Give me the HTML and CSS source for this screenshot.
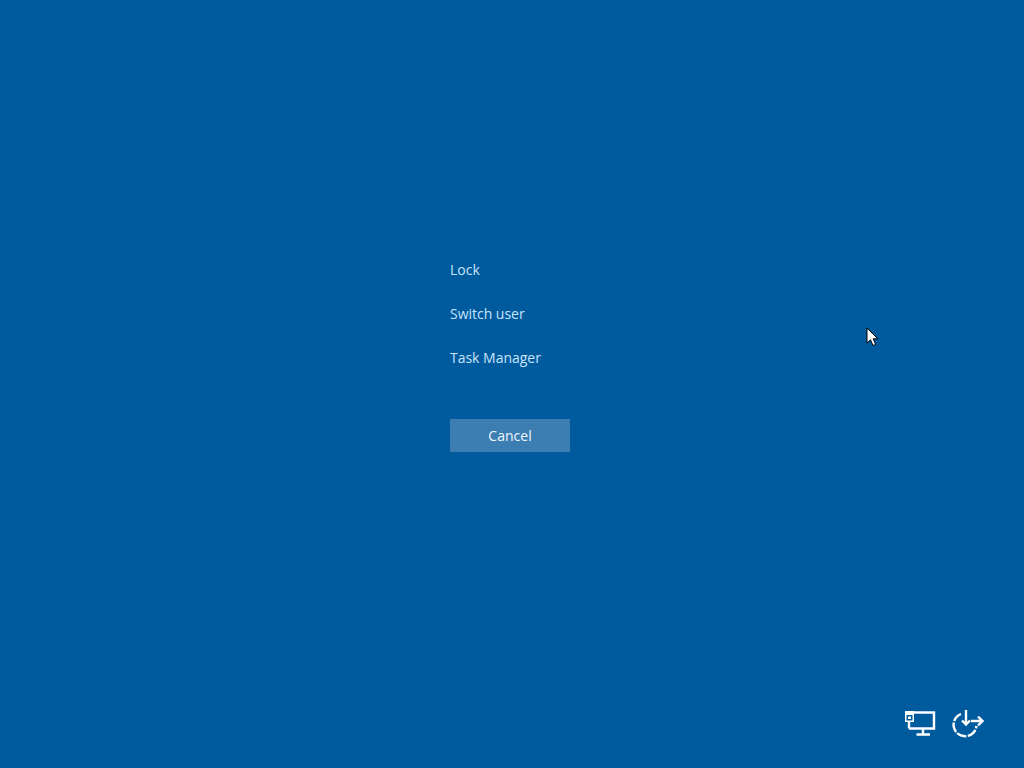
FILE: index.html
```html
<!DOCTYPE html>
<html lang="en">
<head>
<meta charset="utf-8">
<title>Security options</title>
<link rel="stylesheet" href="styles.css">
</head>
<body>
<main class="screen">
  <section class="options">
    <nav class="menu">
      <a class="menu-item">Lock</a>
      <a class="menu-item">Switch user</a>
      <a class="menu-item">Task Manager</a>
    </nav>
    <button class="cancel" type="button">Cancel</button>
  </section>
  <footer class="tray">
    <svg class="icon" width="32" height="28" viewBox="0 0 32 28" fill="none" stroke="#fff" stroke-width="2.400">
      <path d="M10 2.500H30V18.500H5"/>
      <path d="M5 11V18.500"/>
      <path d="M19 18.500V24.500M12.500 24.500H26"/>
      <rect x="1.750" y="1.750" width="7.500" height="9.500" stroke-width="1.500"/>
      <rect x="1" y="1" width="9" height="4" fill="#fff" stroke="none"/>
      <rect x="4" y="6.500" width="3" height="2.500" fill="#fff" stroke="none"/>
    </svg>
    <svg class="icon" width="32" height="28" viewBox="0 0 32 28" fill="none" stroke="#fff" stroke-width="2.400">
      <path d="M9 4A11.500 11.500 0 1 0 24.500 16" stroke-dasharray="10 1.500"/>
      <path d="M14 0V14.500M10 10.500L14 14.500L18 10.500"/>
      <path d="M19 11H30.500M26 6.500L30.500 11L26 15.500"/>
    </svg>
  </footer>
  <svg class="cursor" width="13" height="20" viewBox="0 0 13 20">
    <path d="M1 1V16L4.500 12.800L7 18.500L9.600 17.400L7.200 11.800H11.800Z" fill="#fff" stroke="#000" stroke-width="1"/>
  </svg>
</main>
</body>
</html>
```
FILE: styles.css
```css
html, body {
  margin: 0;
  height: 100%;
}

body {
  background: #005a9e;
  color: #c8e4f9;
  font-family: "Open Sans", "Noto Sans", sans-serif;
  overflow: hidden;
}

.screen {
  position: relative;
  height: 768px;
  display: flex;
  flex-direction: column;
  justify-content: space-between;
}

.options {
  display: flex;
  flex-direction: column;
  align-items: flex-start;
  padding: 259px 0 0 450px;
}

.menu {
  display: flex;
  flex-direction: column;
  gap: 22px;
  margin-bottom: 50px;
}

.menu-item {
  font-size: 14px;
  line-height: 22px;
  letter-spacing: -0.02px;
}

.cancel {
  width: 120px;
  height: 33px;
  border: 0;
  padding: 0;
  background: #3c7db2;
  color: #ecf6fd;
  font: inherit;
  font-size: 14px;
  letter-spacing: 0.02px;
}

.tray {
  display: flex;
  justify-content: flex-end;
  align-items: center;
  gap: 16px;
  padding: 0 40px 30px 0;
}

.cursor {
  position: absolute;
  left: 866px;
  top: 327px;
}
```
